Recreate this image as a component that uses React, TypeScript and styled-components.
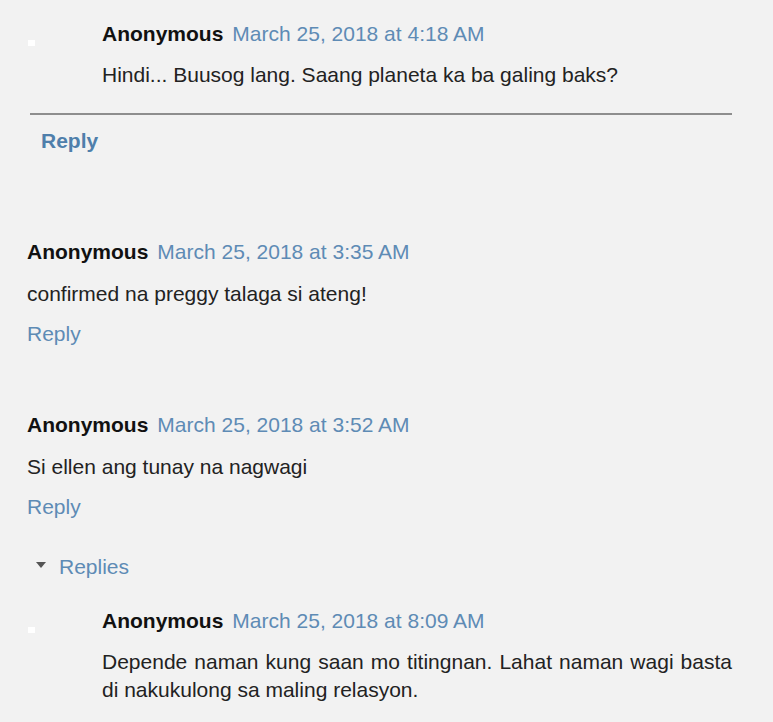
import React from "react";
import styled, { createGlobalStyle } from "styled-components";

const Global = createGlobalStyle`
  html, body { margin: 0; padding: 0; background: #f2f2f2; }
  body { font-family: "Liberation Sans", Arial, sans-serif; font-size: 21px; color: #222; }
`;

const Page = styled.div`
  width: 773px;
  min-height: 722px;
  background: #f2f2f2;
  overflow: hidden;
  padding-top: 20px;
  box-sizing: border-box;
`;

const NestedReply = styled.div`
  position: relative;
  display: flex;
  flex-direction: column;
  padding-left: 102px;
  padding-right: 41px;
  margin-top: ${(p: { $top?: number }) => p.$top ?? 0}px;
`;

const Avatar = styled.span`
  position: absolute;
  left: 28px;
  top: ${(p: { $y: number }) => p.$y}px;
  width: 7px;
  height: 6px;
  background: #fff;
`;

const Header = styled.div`
  display: flex;
  align-items: baseline;
  gap: 9px;
  line-height: 28px;
  white-space: nowrap;
`;

const Author = styled.span`
  font-weight: bold;
  color: #111;
`;

const DateLink = styled.a`
  color: #5e8bb5;
  text-decoration: none;
`;

const Body = styled.p`
  margin: ${(p: { $gap: number }) => p.$gap}px 0 0;
  line-height: 28px;
  color: #222;
  text-align: justify;
`;

const Divider = styled.hr`
  margin: 24px 41px 0 30px;
  border: none;
  height: 2px;
  background: #8e8e8e;
`;

const ReplyLink = styled.a<{ $bold?: boolean; $left: number; $gap: number }>`
  display: block;
  margin: ${(p) => p.$gap}px 0 0 ${(p) => p.$left}px;
  line-height: 28px;
  color: ${(p) => (p.$bold ? "#4f7fab" : "#5e8bb5")};
  font-weight: ${(p) => (p.$bold ? "bold" : "normal")};
  text-decoration: none;
`;

const Comment = styled.div<{ $top: number }>`
  display: flex;
  flex-direction: column;
  padding-left: 27px;
  margin-top: ${(p) => p.$top}px;
`;

const Toggle = styled.div`
  display: flex;
  align-items: center;
  gap: 13px;
  margin: 32px 0 0 36px;
  line-height: 28px;
  color: #5e8bb5;
`;

const Caret = styled.span`
  width: 0;
  height: 0;
  border-left: 5px solid transparent;
  border-right: 5px solid transparent;
  border-top: 6px solid #555;
  margin-top: -4px;
`;

export default function App() {
  return (
    <>
      <Global />
      <Page>
        <NestedReply>
          <Avatar $y={20} />
          <Header>
            <Author>Anonymous</Author>
            <DateLink>March 25, 2018 at 4:18 AM</DateLink>
          </Header>
          <Body $gap={13}>Hindi... Buusog lang. Saang planeta ka ba galing baks?</Body>
        </NestedReply>
        <Divider />
        <ReplyLink $bold $left={41} $gap={12}>Reply</ReplyLink>

        <Comment $top={83}>
          <Header>
            <Author>Anonymous</Author>
            <DateLink>March 25, 2018 at 3:35 AM</DateLink>
          </Header>
          <Body $gap={14}>confirmed na preggy talaga si ateng!</Body>
          <ReplyLink $left={0} $gap={12}>Reply</ReplyLink>
        </Comment>

        <Comment $top={63}>
          <Header>
            <Author>Anonymous</Author>
            <DateLink>March 25, 2018 at 3:52 AM</DateLink>
          </Header>
          <Body $gap={14}>Si ellen ang tunay na nagwagi</Body>
          <ReplyLink $left={0} $gap={12}>Reply</ReplyLink>
        </Comment>

        <Toggle>
          <Caret />
          <span>Replies</span>
        </Toggle>

        <NestedReply $top={26}>
          <Avatar $y={20} />
          <Header>
            <Author>Anonymous</Author>
            <DateLink>March 25, 2018 at 8:09 AM</DateLink>
          </Header>
          <Body $gap={13}>
            Depende naman kung saan mo titingnan. Lahat naman wagi basta di nakukulong sa maling relasyon.
          </Body>
        </NestedReply>
      </Page>
    </>
  );
}
